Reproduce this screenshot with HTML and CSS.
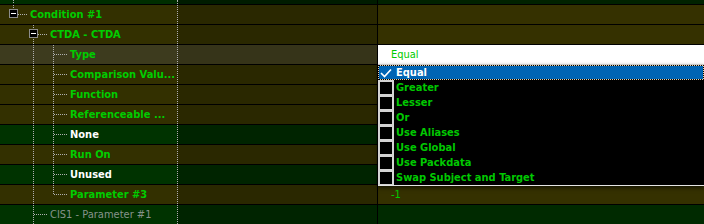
FILE: index.html
```html
<!DOCTYPE html>
<html lang="en">
<head>
    <meta charset="UTF-8">
    <title>Condition Editor</title>
    <link rel="stylesheet" href="styles.css">
</head>
<body>
    <div class="grid">
        <div class="row top">
            <div class="tree"><span class="pad"></span><span class="g pipe"></span></div>
            <div class="mid"></div>
            <div class="val"></div>
        </div>

        <div class="row olive">
            <div class="tree"><span class="pad"></span><span class="conn end"><span class="box"></span></span><span class="label">Condition #1</span></div>
            <div class="mid"></div>
            <div class="val"></div>
        </div>

        <div class="row olive">
            <div class="tree"><span class="pad"></span><span class="g"></span><span class="conn tee"><span class="box"></span></span><span class="label">CTDA - CTDA</span></div>
            <div class="mid"></div>
            <div class="val"></div>
        </div>

        <div class="row hot">
            <div class="tree"><span class="pad"></span><span class="g"></span><span class="g pipe"></span><span class="conn tee"></span><span class="label">Type</span></div>
            <div class="mid"></div>
            <div class="val">
                Equal
                <div class="list">
                    <div class="opt sel"><span class="chk"><svg width="12" height="10" viewBox="0 0 12 10"><path d="M1 5 L4.5 8.5 L11 1.5" fill="none" stroke="#fff" stroke-width="1.6"/></svg></span>Equal</div>
                    <div class="opt"><span class="chk"></span>Greater</div>
                    <div class="opt"><span class="chk"></span>Lesser</div>
                    <div class="opt"><span class="chk"></span>Or</div>
                    <div class="opt"><span class="chk"></span>Use Aliases</div>
                    <div class="opt"><span class="chk"></span>Use Global</div>
                    <div class="opt"><span class="chk"></span>Use Packdata</div>
                    <div class="opt"><span class="chk"></span>Swap Subject and Target</div>
                </div>
            </div>
        </div>

        <div class="row olive">
            <div class="tree"><span class="pad"></span><span class="g"></span><span class="g pipe"></span><span class="conn tee"></span><span class="label">Comparison Valu...</span></div>
            <div class="mid"></div>
            <div class="val"></div>
        </div>

        <div class="row olive">
            <div class="tree"><span class="pad"></span><span class="g"></span><span class="g pipe"></span><span class="conn tee"></span><span class="label">Function</span></div>
            <div class="mid"></div>
            <div class="val"></div>
        </div>

        <div class="row olive">
            <div class="tree"><span class="pad"></span><span class="g"></span><span class="g pipe"></span><span class="conn tee"></span><span class="label">Referenceable ...</span></div>
            <div class="mid"></div>
            <div class="val"></div>
        </div>

        <div class="row green">
            <div class="tree"><span class="pad"></span><span class="g"></span><span class="g pipe"></span><span class="conn tee"></span><span class="label white">None</span></div>
            <div class="mid"></div>
            <div class="val"></div>
        </div>

        <div class="row olive">
            <div class="tree"><span class="pad"></span><span class="g"></span><span class="g pipe"></span><span class="conn tee"></span><span class="label">Run On</span></div>
            <div class="mid"></div>
            <div class="val"></div>
        </div>

        <div class="row green">
            <div class="tree"><span class="pad"></span><span class="g"></span><span class="g pipe"></span><span class="conn tee"></span><span class="label white">Unused</span></div>
            <div class="mid"></div>
            <div class="val"></div>
        </div>

        <div class="row olive">
            <div class="tree"><span class="pad"></span><span class="g"></span><span class="g pipe"></span><span class="conn end"></span><span class="label">Parameter #3</span></div>
            <div class="mid"></div>
            <div class="val">-1</div>
        </div>

        <div class="row green">
            <div class="tree"><span class="pad"></span><span class="g"></span><span class="conn tee"></span><span class="label grey">CIS1 - Parameter #1</span></div>
            <div class="mid"></div>
            <div class="val"></div>
        </div>
    </div>
</body>
</html>
```

FILE: styles.css
```css
body {
    margin: 0;
    background-color: #002200;
    font-family: "DejaVu Sans Condensed", "DejaVu Sans", sans-serif;
    font-size: 11px;
    font-weight: bold;
    color: #00cc00;
}
.grid {
    width: 704px;
    height: 224px;
    overflow: hidden;
}
.row {
    display: flex;
    height: 19px;
    border-bottom: 1px solid #000;
}
.row.top {
    height: 4px;
}
.tree {
    width: 177px;
    flex: none;
    display: flex;
    align-items: center;
}
.mid {
    width: 199px;
    flex: none;
    border-left: 1px dotted #b0b0b0;
    border-right: 1px solid #000;
}
.val {
    flex: 1;
    position: relative;
    display: flex;
    align-items: center;
    padding-left: 13px;
    font-weight: normal;
}

/* row colours */
.top .tree { background-color: #002e00; }
.top .mid { background-color: #001c00; }
.top .val { background-color: #002200; }
.olive .tree { background-color: #333000; }
.olive .mid { background-color: #2a2800; }
.olive .val { background-color: #353100; }
.green .tree { background-color: #003300; }
.green .mid { background-color: #002400; }
.green .val { background-color: #002a00; }
.hot .tree { background-color: #3d3b1e; }
.hot .mid { background-color: #363419; }
.hot .val { background-color: #fff; }

/* tree guides */
.pad {
    width: 3px;
    flex: none;
    align-self: stretch;
}
.g {
    width: 20px;
    flex: none;
    align-self: stretch;
}
.pipe {
    background-image: repeating-linear-gradient(to bottom, #b0b0b0 0 1px, transparent 1px 2px);
    background-size: 1px 100%;
    background-position: 10px 0;
    background-repeat: no-repeat;
}
.conn {
    width: 24px;
    flex: none;
    align-self: stretch;
    background-repeat: no-repeat;
}
.conn.tee {
    background-image:
        repeating-linear-gradient(to bottom, #b0b0b0 0 1px, transparent 1px 2px),
        repeating-linear-gradient(to right, #b0b0b0 0 1px, transparent 1px 2px);
    background-size: 1px 100%, 13px 1px;
    background-position: 10px 0, 11px 9px;
}
.conn.end {
    background-image:
        repeating-linear-gradient(to bottom, #b0b0b0 0 1px, transparent 1px 2px),
        repeating-linear-gradient(to right, #b0b0b0 0 1px, transparent 1px 2px);
    background-size: 1px 10px, 13px 1px;
    background-position: 10px 0, 11px 9px;
}
.box {
    display: block;
    box-sizing: border-box;
    width: 9px;
    height: 9px;
    margin: 4px 0 0 6px;
    border: 1px solid #8c8c8c;
    background: linear-gradient(#fff, #fff) center / 5px 1px no-repeat, #000;
}
.label {
    margin-left: 3px;
    white-space: nowrap;
}
.label.white {
    color: #fff;
}
.label.grey {
    color: #86928a;
    font-weight: normal;
}

/* dropdown of flags */
.list {
    position: absolute;
    left: 0;
    right: 0;
    top: 19px;
    z-index: 2;
    background-color: #000;
    border-top: 1px solid #c8c8c8;
    border-bottom: 1px solid #e4e4e4;
    box-shadow: 0 2px 4px rgba(0, 0, 0, 0.6);
}
.opt {
    display: flex;
    align-items: center;
    height: 15px;
    font-weight: bold;
    color: #00c800;
    white-space: nowrap;
}
.chk {
    width: 12px;
    height: 12px;
    flex: none;
    margin-right: 2px;
    background-color: #000;
    border: solid #d4d4d4;
    border-width: 2px 2px 1px 2px;
}
.opt.sel {
    box-sizing: border-box;
    border: 1px dotted #000;
    background: linear-gradient(#0064b4, #0064b4) padding-box, #e8d0a8;
    color: #fff;
}
.opt.sel .chk {
    border-color: transparent;
    border-width: 1px 2px 0 1px;
    background-color: transparent;
    display: flex;
    align-items: center;
}
```
